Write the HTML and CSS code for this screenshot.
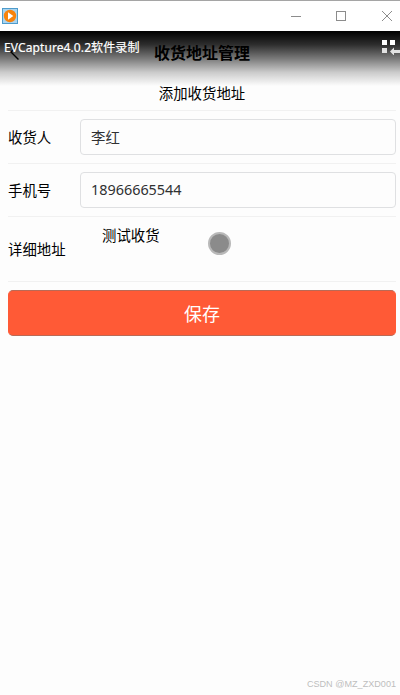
FILE: index.html
```
<!DOCTYPE html>
<html lang="zh-CN">
<head>
    <meta charset="utf-8" />
    <title>收货地址管理</title>
    <link rel="stylesheet" href="styles.css">
</head>
<body>

<div class="titlebar">
    <svg class="app-icon" width="16" height="16" viewBox="0 0 16 16">
        <rect x=".5" y=".5" width="15" height="15" fill="#a9d4f0" stroke="#4e9bcb" />
        <circle cx="8" cy="8" r="6.2" fill="#f8830c" />
        <path d="M6 4.3v7.4L11.3 8z" fill="#fff" />
    </svg>
    <svg class="win-btns" width="102" height="12" viewBox="0 0 102 12" fill="none" stroke="#8c8c8c">
        <path d="M0 6.5h10" />
        <rect x="45.5" y="1.5" width="9" height="9" />
        <path d="M91 1l10 10M101 1l-10 10" />
    </svg>
</div>

<div class="page">
    <div class="header">
        <svg class="back" width="10" height="18" viewBox="0 0 10 18" fill="none" stroke="#000" stroke-width="1.4">
            <path d="M8.500 .5L1 8L8.500 15.500" />
        </svg>
        <h1>收货地址管理</h1>
    </div>

    <form class="address">
        <div class="row caption">添加收货地址</div>
        <div class="row">
            <label for="name">收货人</label>
            <input type="text" id="name" value="李红" />
        </div>
        <div class="row">
            <label for="phone">手机号</label>
            <input type="text" id="phone" value="18966665544" />
        </div>
        <div class="row detail">
            <label>详细地址</label>
            <div class="detail-text">测试收货</div>
        </div>
        <button type="button" class="save">保存</button>
    </form>

    <!-- recorder bar on top of the header -->
    <div class="recorder">
        <span>EVCapture4.0.2软件录制</span>
        <svg class="grid-icon" width="19" height="16" viewBox="0 0 19 16">
            <path d="M1 1h5v5H1zM9 1h5v5H9z" fill="#fff" />
            <path d="M1 9h5v5H1zM9 12.5l4-4V11h6v3h-6v2.500z" fill="#e2e2e2" />
        </svg>
    </div>
    <div class="touch"></div>
</div>

<div class="watermark">CSDN @MZ_ZXD001</div>

</body>
</html>
```

FILE: styles.css
```
html, body {
    margin: 0;
    padding: 0;
    height: 100%;
    }
body {
    position: relative;
    overflow: hidden;
    background: #fdfdfd;
    color: #000;
    font-family: "Noto Sans", "Noto Sans CJK SC", sans-serif;
    font-size: 14.4px;
    }

/* window title bar */
.titlebar {
    box-sizing: border-box;
    height: 31px;
    padding: 0 7px 1px 2px;
    border-top: 1px solid #a5a5a5;
    background: #fff;
    display: flex;
    align-items: center;
    justify-content: space-between;
    }

.page {
    position: relative;
    padding: 0 4px 0 8px;
    }
.header {
    box-sizing: border-box;
    height: 45px;
    padding-bottom: 2px;
    display: flex;
    align-items: center;
    justify-content: center;
    }
.header h1 {
    margin: 0;
    font-size: 16px;
    line-height: 24px;
    font-weight: bold;
    }
.back {
    position: absolute;
    left: 10px;
    top: 13px;
    }

/* form */
.row {
    box-sizing: border-box;
    height: 53px;
    border-bottom: 1px solid #f1f1f1;
    display: flex;
    align-items: center;
    }
.row label {
    width: 72px;
    flex: none;
    padding-bottom: 1px;
    }
.caption {
    height: 35px;
    padding-bottom: 2px;
    justify-content: center;
    }
.row input {
    box-sizing: border-box;
    flex: 1;
    min-width: 0;
    height: 36px;
    margin: 0;
    padding: 0 10px 1px;
    border: 1px solid #dfe0e2;
    border-radius: 4px;
    background: #fdfdfd;
    color: #303133;
    font: inherit;
    }
.detail {
    height: 65px;
    }
.detail-text {
    align-self: flex-start;
    padding: 7px 0 0 22px;
    }
.save {
    display: block;
    width: 100%;
    height: 46px;
    margin: 8px 0 0;
    padding: 0;
    border: 1px solid #b96a56;
    border-left-color: #ff5a36;
    border-right-color: #ff5a36;
    border-radius: 5px;
    background: #ff5a36;
    color: #fff;
    font-family: inherit;
    font-size: 18px;
    }

/* overlays */
.recorder {
    position: absolute;
    left: 0;
    top: 0;
    width: 100%;
    height: 55px;
    background: linear-gradient(#000, rgba(0, 0, 0, .82) 25%, rgba(0, 0, 0, .52) 50%, rgba(0, 0, 0, .2) 75%, rgba(0, 0, 0, 0));
    color: #fff;
    font-size: 12px;
    line-height: 18px;
    letter-spacing: .1px;
    -webkit-text-stroke: .2px #fff;
    }
.recorder span {
    position: absolute;
    left: 4px;
    top: 8px;
    white-space: nowrap;
    }
.grid-icon {
    position: absolute;
    right: 0;
    top: 8px;
    }
.touch {
    position: absolute;
    left: 208px;
    top: 201px;
    box-sizing: border-box;
    width: 23px;
    height: 23px;
    border: 2px solid #b9b9b9;
    border-radius: 50%;
    background: #8b8b8b;
    }
.watermark {
    position: absolute;
    right: 4px;
    bottom: 4px;
    color: #bdbdbd;
    font: 9.1px/14px "Liberation Sans", sans-serif;
    }
```
